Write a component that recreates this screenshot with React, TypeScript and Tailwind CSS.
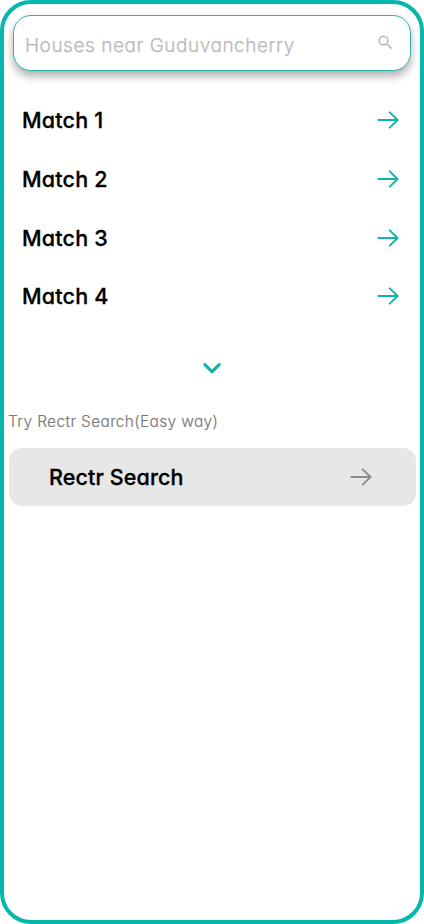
const matches = ["Match 1", "Match 2", "Match 3", "Match 4"];

function Arrow({ className }: { className: string }) {
  return (
    <svg viewBox="0 0 24 20" className={`h-5 w-6 ${className}`} fill="none" stroke="currentColor" strokeWidth="2" strokeLinecap="round" strokeLinejoin="round">
      <path d="M2.4 10H21.4M13.7 2.4 21.6 10l-7.9 7.6" />
    </svg>
  );
}

export default function App() {
  return (
    <main className="flex h-[924px] w-[424px] flex-col rounded-[31px] border-4 border-[#05b7ac] bg-white pt-[11px] font-['Inter','Open_Sans',sans-serif] [font-feature-settings:'cv11']">
      <label className="ml-[8.5px] flex h-[55.5px] w-[398.5px] items-center justify-between rounded-[18px] border border-[#2cb5ab] bg-white pr-[15px] pl-[11.5px] shadow-[0_5px_8px_0_rgba(0,0,0,0.32)]">
        <span className="pt-[7px] text-[19px] leading-6 font-light tracking-[0.53px] whitespace-nowrap text-[#bababa] [-webkit-text-stroke:0.25px_#bababa]">Houses near Guduvancherry</span>
        <svg viewBox="0 0 24 24" className="mb-[1px] size-[19px] shrink-0 fill-[#bababa]">
          <path d="M15.5 14h-.79l-.28-.27A6.47 6.47 0 0 0 16 9.5 6.5 6.5 0 1 0 9.5 16c1.61 0 3.09-.59 4.23-1.57l.27.28v.79l5 4.99L20.49 19l-4.99-5zm-6 0a4.5 4.5 0 1 1 0-9 4.5 4.5 0 0 1 0 9z" />
        </svg>
      </label>

      <ul className="mt-[20.5px] flex flex-col">
        {matches.map((m) => (
          <li key={m} className="flex h-[58.67px] items-center justify-between pr-[20px] pl-[18px]">
            <span className="text-[21.5px] leading-7 font-medium tracking-[0.2px] text-black [-webkit-text-stroke:0.3px_#000]">{m}</span>
            <Arrow className="text-[#0fb5a9]" />
          </li>
        ))}
      </ul>

      <svg viewBox="0 0 20 12" className="mt-[36.5px] h-3 w-5 self-center" fill="none" stroke="#0fb5a9" strokeWidth="3.2" strokeLinecap="round" strokeLinejoin="round">
        <path d="m2.8 2.7 7.2 7 7.2-7" />
      </svg>

      <p className="mt-[36px] pl-[4px] text-[15.5px] leading-6 font-light tracking-[0.34px] whitespace-nowrap text-[#777] [-webkit-text-stroke:0.15px_#777]">Try Rectr Search(Easy way)</p>

      <button className="mt-[13.8px] ml-[4.5px] flex h-[58px] w-[407px] items-center justify-between rounded-[13px] bg-[#e7e7e7] pr-[42.5px] pl-[40.5px]">
        <span className="text-[21.5px] leading-7 font-medium tracking-[0.13px] text-black [-webkit-text-stroke:0.3px_#000]">Rectr Search</span>
        <Arrow className="text-[#8e8e8e]" />
      </button>
    </main>
  );
}
